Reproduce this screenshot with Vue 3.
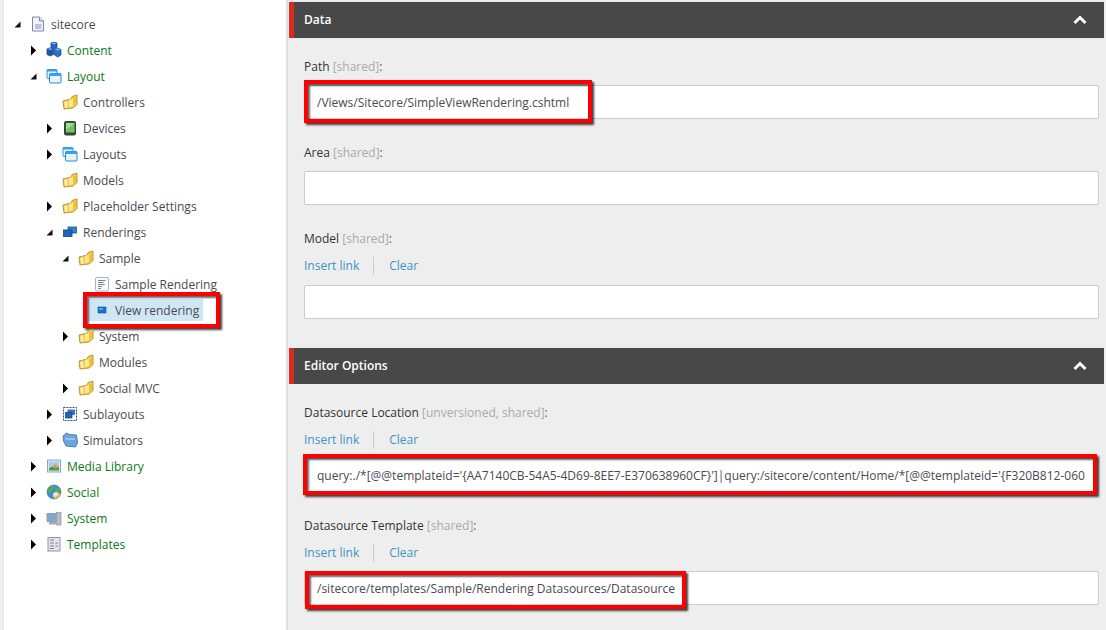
<script setup>
const tree = [
  { t: 'sitecore', l: 0, a: 'open', i: 'page' },
  { t: 'Content', l: 1, a: 'closed', i: 'cubes', g: 1 },
  { t: 'Layout', l: 1, a: 'open', i: 'windows', g: 1 },
  { t: 'Controllers', l: 2, i: 'folder' },
  { t: 'Devices', l: 2, a: 'closed', i: 'device' },
  { t: 'Layouts', l: 2, a: 'closed', i: 'windows' },
  { t: 'Models', l: 2, i: 'folder' },
  { t: 'Placeholder Settings', l: 2, a: 'closed', i: 'folder' },
  { t: 'Renderings', l: 2, a: 'open', i: 'renderings' },
  { t: 'Sample', l: 3, a: 'open', i: 'folder' },
  { t: 'Sample Rendering', l: 4, i: 'doc' },
  { t: 'View rendering', l: 4, i: 'view', sel: 1 },
  { t: 'System', l: 3, a: 'closed', i: 'folder' },
  { t: 'Modules', l: 3, i: 'folder' },
  { t: 'Social MVC', l: 3, a: 'closed', i: 'folder' },
  { t: 'Sublayouts', l: 2, a: 'closed', i: 'sublayouts' },
  { t: 'Simulators', l: 2, a: 'closed', i: 'simfolder' },
  { t: 'Media Library', l: 1, a: 'closed', i: 'media', g: 1 },
  { t: 'Social', l: 1, a: 'closed', i: 'globe', g: 1 },
  { t: 'System', l: 1, a: 'closed', i: 'system', g: 1 },
  { t: 'Templates', l: 1, a: 'closed', i: 'templates', g: 1 }
]
const dsLocation = "query:./*[@@templateid='{AA7140CB-54A5-4D69-8EE7-E370638960CF}']|query:/sitecore/content/Home/*[@@templateid='{F320B812-060"
</script>

<template>
  <div class="page">
    <aside class="tree">
      <div v-for="(n, idx) in tree" :key="idx" class="row" :class="{ green: n.g }" :style="{ paddingLeft: 13 + n.l * 16 + 'px' }">
        <span class="arrow">
          <svg v-if="n.a === 'closed'" width="7" height="11" viewBox="0 0 7 11"><path d="M1 0.5 L6 5.5 L1 10.5 Z" fill="#000" /></svg>
          <svg v-else-if="n.a === 'open'" width="7" height="7" viewBox="0 0 7 7"><path d="M6.5 0.5 V6.5 H0.5 Z" fill="#111" /></svg>
        </span>
        <span class="label-wrap" :class="{ sel: n.sel }">
          <svg class="ic" width="16" height="16" viewBox="0 0 16 16">
            <template v-if="n.i === 'page'">
              <path d="M2.5 1 H9.5 L13.5 5 V15 H2.5 Z" fill="#f3f4fa" stroke="#8582b8" />
              <path d="M9.5 1 V5 H13.5" fill="#dfe0f0" stroke="#8582b8" />
              <rect x="5" y="8" width="6.5" height="5" fill="#b8c4e0" />
            </template>
            <template v-else-if="n.i === 'cubes'">
              <path d="M5 1 L8 0 L11 1 V5.5 L8 7 L5 5.5 Z" fill="#2468bf" stroke="#123f86" stroke-width=".7" />
              <path d="M1 7 L4 5.8 L7.5 7 V12.5 L4 14 L1 12.5 Z" fill="#1c58ae" stroke="#123f86" stroke-width=".7" />
              <path d="M8.5 7.5 L11.7 6.2 L15 7.5 V13 L11.7 15 L8.5 13 Z" fill="#2a70cc" stroke="#123f86" stroke-width=".7" />
              <path d="M5.5 1.4 L8 2.5 L10.5 1.4 L8 .5 Z M1.5 7 L4 8 L7 7 L4 6.2 Z M9 7.5 L11.7 8.6 L14.5 7.5 L11.7 6.6 Z" fill="#7fb8f2" />
            </template>
            <template v-else-if="n.i === 'windows'">
              <rect x="1" y="1.5" width="10" height="9" rx="1" fill="#e7f3fd" stroke="#2a96ee" />
              <rect x="1" y="1.5" width="10" height="2" fill="#3aa0f4" />
              <rect x="3.5" y="5.5" width="11.5" height="9.5" rx="1" fill="#eef1f4" stroke="#1b8cf0" />
              <rect x="3.5" y="5.5" width="11.5" height="2.5" fill="#3aa0f4" />
            </template>
            <template v-else-if="n.i === 'folder'">
              <path d="M1 7 L2 15 L11 14 L15 10.5 V1 L10 2.5 L9.5 5 Z" fill="#f7ce4a" stroke="#b9892b" stroke-width=".9" stroke-linejoin="round" />
              <path d="M2.5 8 L5 7 L5.5 13.5 L3 14 Z" fill="#fff3b8" />
              <path d="M7 6 L11 4.5 V12 L7 13.2 Z" fill="#fde98f" />
              <path d="M11 4.5 L14 3 V9.5 L11 12 Z" fill="#f0c23c" />
            </template>
            <template v-else-if="n.i === 'device'">
              <rect x="2" y="1" width="12" height="14.5" rx="2" fill="#3d4440" />
              <rect x="4" y="3" width="8.5" height="9.5" fill="#6fc95a" />
              <path d="M4 3 H12.5 L4 10 Z" fill="#a2e090" />
            </template>
            <template v-else-if="n.i === 'renderings'">
              <rect x="6" y="3" width="8.5" height="6" fill="#3a7fc8" stroke="#124f96" stroke-width=".8" />
              <rect x="1.5" y="6" width="8.5" height="6.5" fill="#1e66b8" stroke="#0e4488" stroke-width=".8" />
            </template>
            <template v-else-if="n.i === 'doc'">
              <rect x="1.5" y="1.5" width="13" height="13.5" rx="1.5" fill="#fbfcff" stroke="#a4aed6" />
              <path d="M4 4.5 H11.5 M4 6.5 H9.5 M4 8.5 H10.5 M4 10.5 H8 M4 12.5 H7" stroke="#777f90" fill="none" />
            </template>
            <template v-else-if="n.i === 'view'">
              <rect x="4" y="5" width="8" height="6" fill="#1c72cc" stroke="#0f4f9c" stroke-width=".6" />
              <rect x="5" y="6" width="4" height="2" fill="#5aa3ea" />
            </template>
            <template v-else-if="n.i === 'sublayouts'">
              <rect x="1.5" y="1.5" width="13" height="13" fill="#fff" stroke="#1d4f9c" stroke-dasharray="2 1" />
              <rect x="6" y="4" width="6.5" height="4.5" fill="#3a7fc8" stroke="#124f96" stroke-width=".7" />
              <rect x="3.5" y="6.5" width="6.5" height="5.5" fill="#1e66b8" stroke="#0e4488" stroke-width=".7" />
            </template>
            <template v-else-if="n.i === 'simfolder'">
              <path d="M1 4 L4.5 1 L7.5 2.5 L14.5 3 L15.5 11 L13.5 15 L4 14 L1.5 9 Z" fill="#6ba4de" stroke="#3a6fa8" stroke-width=".8" stroke-linejoin="round" />
              <path d="M3 6 L13 6.5 L13 8 L3.5 7.5 Z" fill="#a9cdf0" />
            </template>
            <template v-else-if="n.i === 'media'">
              <rect x="1.5" y="2" width="13" height="12" fill="#dbe8f6" stroke="#8ea6c8" />
              <rect x="3" y="3.5" width="10" height="6" fill="#a9cdee" />
              <path d="M3 12.5 V10 L6 8.5 L9 10 L13 9 V12.5 Z" fill="#4f9c3a" />
              <circle cx="9.5" cy="8.5" r="2" fill="#e8913a" />
            </template>
            <template v-else-if="n.i === 'globe'">
              <circle cx="8" cy="8" r="7" fill="#3b8fd0" stroke="#2b6d9c" stroke-width=".6" />
              <path d="M2 6 Q5 2 8 1.5 L7 6 L4 9 L2.5 9 Z M9 4 L13 4 L14 8 L10 9 Z" fill="#5cae42" />
              <circle cx="10" cy="11" r="3.2" fill="#e8e8e8" stroke="#888" stroke-width=".6" />
              <path d="M8.5 14.5 L14.5 10" stroke="#e9c232" stroke-width="1.8" />
            </template>
            <template v-else-if="n.i === 'system'">
              <rect x="1" y="3.5" width="10" height="8" fill="#7ea9d4" stroke="#9aa0a6" />
              <rect x="10.5" y="2.5" width="4.5" height="12.5" fill="#b9bdc2" stroke="#9aa0a6" stroke-width=".8" />
              <rect x="3" y="12" width="7" height="2.5" fill="#a6abb0" />
            </template>
            <template v-else-if="n.i === 'templates'">
              <rect x="2" y="1.5" width="12" height="13.5" fill="#e4e6ea" stroke="#8d95a5" />
              <path d="M4 4 H8 M4 7 H8 M4 10 H8 M4 12.5 H8 M9.5 7 H12 M9.5 10 H12" stroke="#7b8390" fill="none" />
            </template>
          </svg>
          <span class="txt">{{ n.t }}</span>
          <span v-if="n.sel" class="hl hl-tree"></span>
        </span>
      </div>
    </aside>

    <main class="content">
      <section>
        <header class="bar">
          <span>Data</span>
          <svg width="14" height="10" viewBox="0 0 14 10"><path d="M1.5 8 L7 2.5 L12.5 8" fill="none" stroke="#fff" stroke-width="3" /></svg>
        </header>
        <div class="body">
          <div class="field">
            <div class="lab">Path <em>[shared]</em><b>:</b></div>
            <div class="input">/Views/Sitecore/SimpleViewRendering.cshtml<span class="hl hl-path"></span></div>
          </div>
          <div class="field">
            <div class="lab">Area <em>[shared]</em><b>:</b></div>
            <div class="input"></div>
          </div>
          <div class="field">
            <div class="lab">Model <em>[shared]</em><b>:</b></div>
            <div class="links"><a>Insert link</a><a>Clear</a></div>
            <div class="input"></div>
          </div>
        </div>
      </section>
      <section>
        <header class="bar">
          <span>Editor Options</span>
          <svg width="14" height="10" viewBox="0 0 14 10"><path d="M1.5 8 L7 2.5 L12.5 8" fill="none" stroke="#fff" stroke-width="3" /></svg>
        </header>
        <div class="body">
          <div class="field">
            <div class="lab">Datasource Location <em>[unversioned, shared]</em><b>:</b></div>
            <div class="links tight"><a>Insert link</a><a>Clear</a></div>
            <div class="input">{{ dsLocation }}<span class="hl hl-loc"></span></div>
          </div>
          <div class="field">
            <div class="lab">Datasource Template <em>[shared]</em><b>:</b></div>
            <div class="links tight"><a>Insert link</a><a>Clear</a></div>
            <div class="input">/sitecore/templates/Sample/Rendering Datasources/Datasource<span class="hl hl-tpl"></span></div>
          </div>
        </div>
      </section>
    </main>
  </div>
</template>

<style>
html, body { margin: 0; background: #eee; overflow: hidden; }
</style>

<style scoped>
.page {
  width: 1106px;
  height: 630px;
  display: flex;
  font-family: "Open Sans", "Liberation Sans", sans-serif;
  font-size: 12px;
  background: #eee;
  overflow: hidden;
}
.tree {
  width: 282px;
  margin-left: 3px;
  flex: none;
  background: #fff;
  border-left: 1px solid #e6e6e6;
  border-right: 2px solid #e0e0e0;
  padding-top: 11px;
  box-sizing: content-box;
  color: #4a4a52;
}
.row {
  height: 26px;
  display: flex;
  align-items: center;
  box-sizing: border-box;
  margin-left: -4px;
}
.row.green { color: #0b7a12; }
.arrow {
  width: 17px;
  flex: none;
  display: flex;
  justify-content: flex-start;
  align-items: center;
  padding-left: 1px;
  box-sizing: border-box;
}
.label-wrap {
  position: relative;
  display: flex;
  align-items: center;
  gap: 5px;
  height: 22px;
}
.label-wrap.sel { background: #cfe7f5; margin-left: -6px; padding-left: 6px; padding-right: 4px; }
.ic { flex: none; }
.txt { white-space: nowrap; }
.hl {
  position: absolute;
  border: 4px solid #f00;
  box-shadow: 2px 2px 2px rgba(0, 0, 0, .75), inset 2px 2px 2px rgba(0, 0, 0, .6);
  box-sizing: border-box;
  pointer-events: none;
}
.hl-tree { left: -5px; top: -7px; width: 137px; height: 36px; }
.hl-path { left: -1px; top: -6px; width: 288px; height: 43px; }
.hl-loc { left: -2px; top: -5px; width: 794px; height: 41px; }
.hl-tpl { left: 0; top: -1px; width: 381px; height: 38px; }
.content {
  flex: 1;
  min-width: 0;
  padding: 2px 2px 0 1px;
}
.bar {
  height: 36px;
  background: #484848;
  border-left: 5px solid #dd2a1f;
  box-sizing: border-box;
  padding: 0 17px 0 10px;
  display: flex;
  align-items: center;
  justify-content: space-between;
  color: #fff;
  font-weight: 600;
  line-height: 34px;
}
.body {
  padding: 19px 5px 0 15px;
  margin-bottom: 29px;
}
.field + .field { margin-top: 24px; }
.lab {
  height: 18px;
  line-height: 20px;
  color: #333;
  margin-bottom: 10px;
}
.lab em { font-style: normal; color: #aaa; }
.lab b { font-weight: 400; color: #555; }
.links {
  height: 18px;
  line-height: 18px;
  margin-bottom: 10px;
  display: flex;
  align-items: center;
}
.links.tight { margin-bottom: 9px; }
.links a { color: #3a94c4; }
.links a:first-child {
  padding-right: 14px;
  margin-right: 15px;
  border-right: 1px solid #ccc;
}
.input {
  position: relative;
  height: 34px;
  box-sizing: border-box;
  background: #fff;
  border: 1px solid #ccc;
  border-radius: 2px;
  padding: 0 12px;
  line-height: 34px;
  color: #4a4a52;
  white-space: nowrap;
}
</style>
